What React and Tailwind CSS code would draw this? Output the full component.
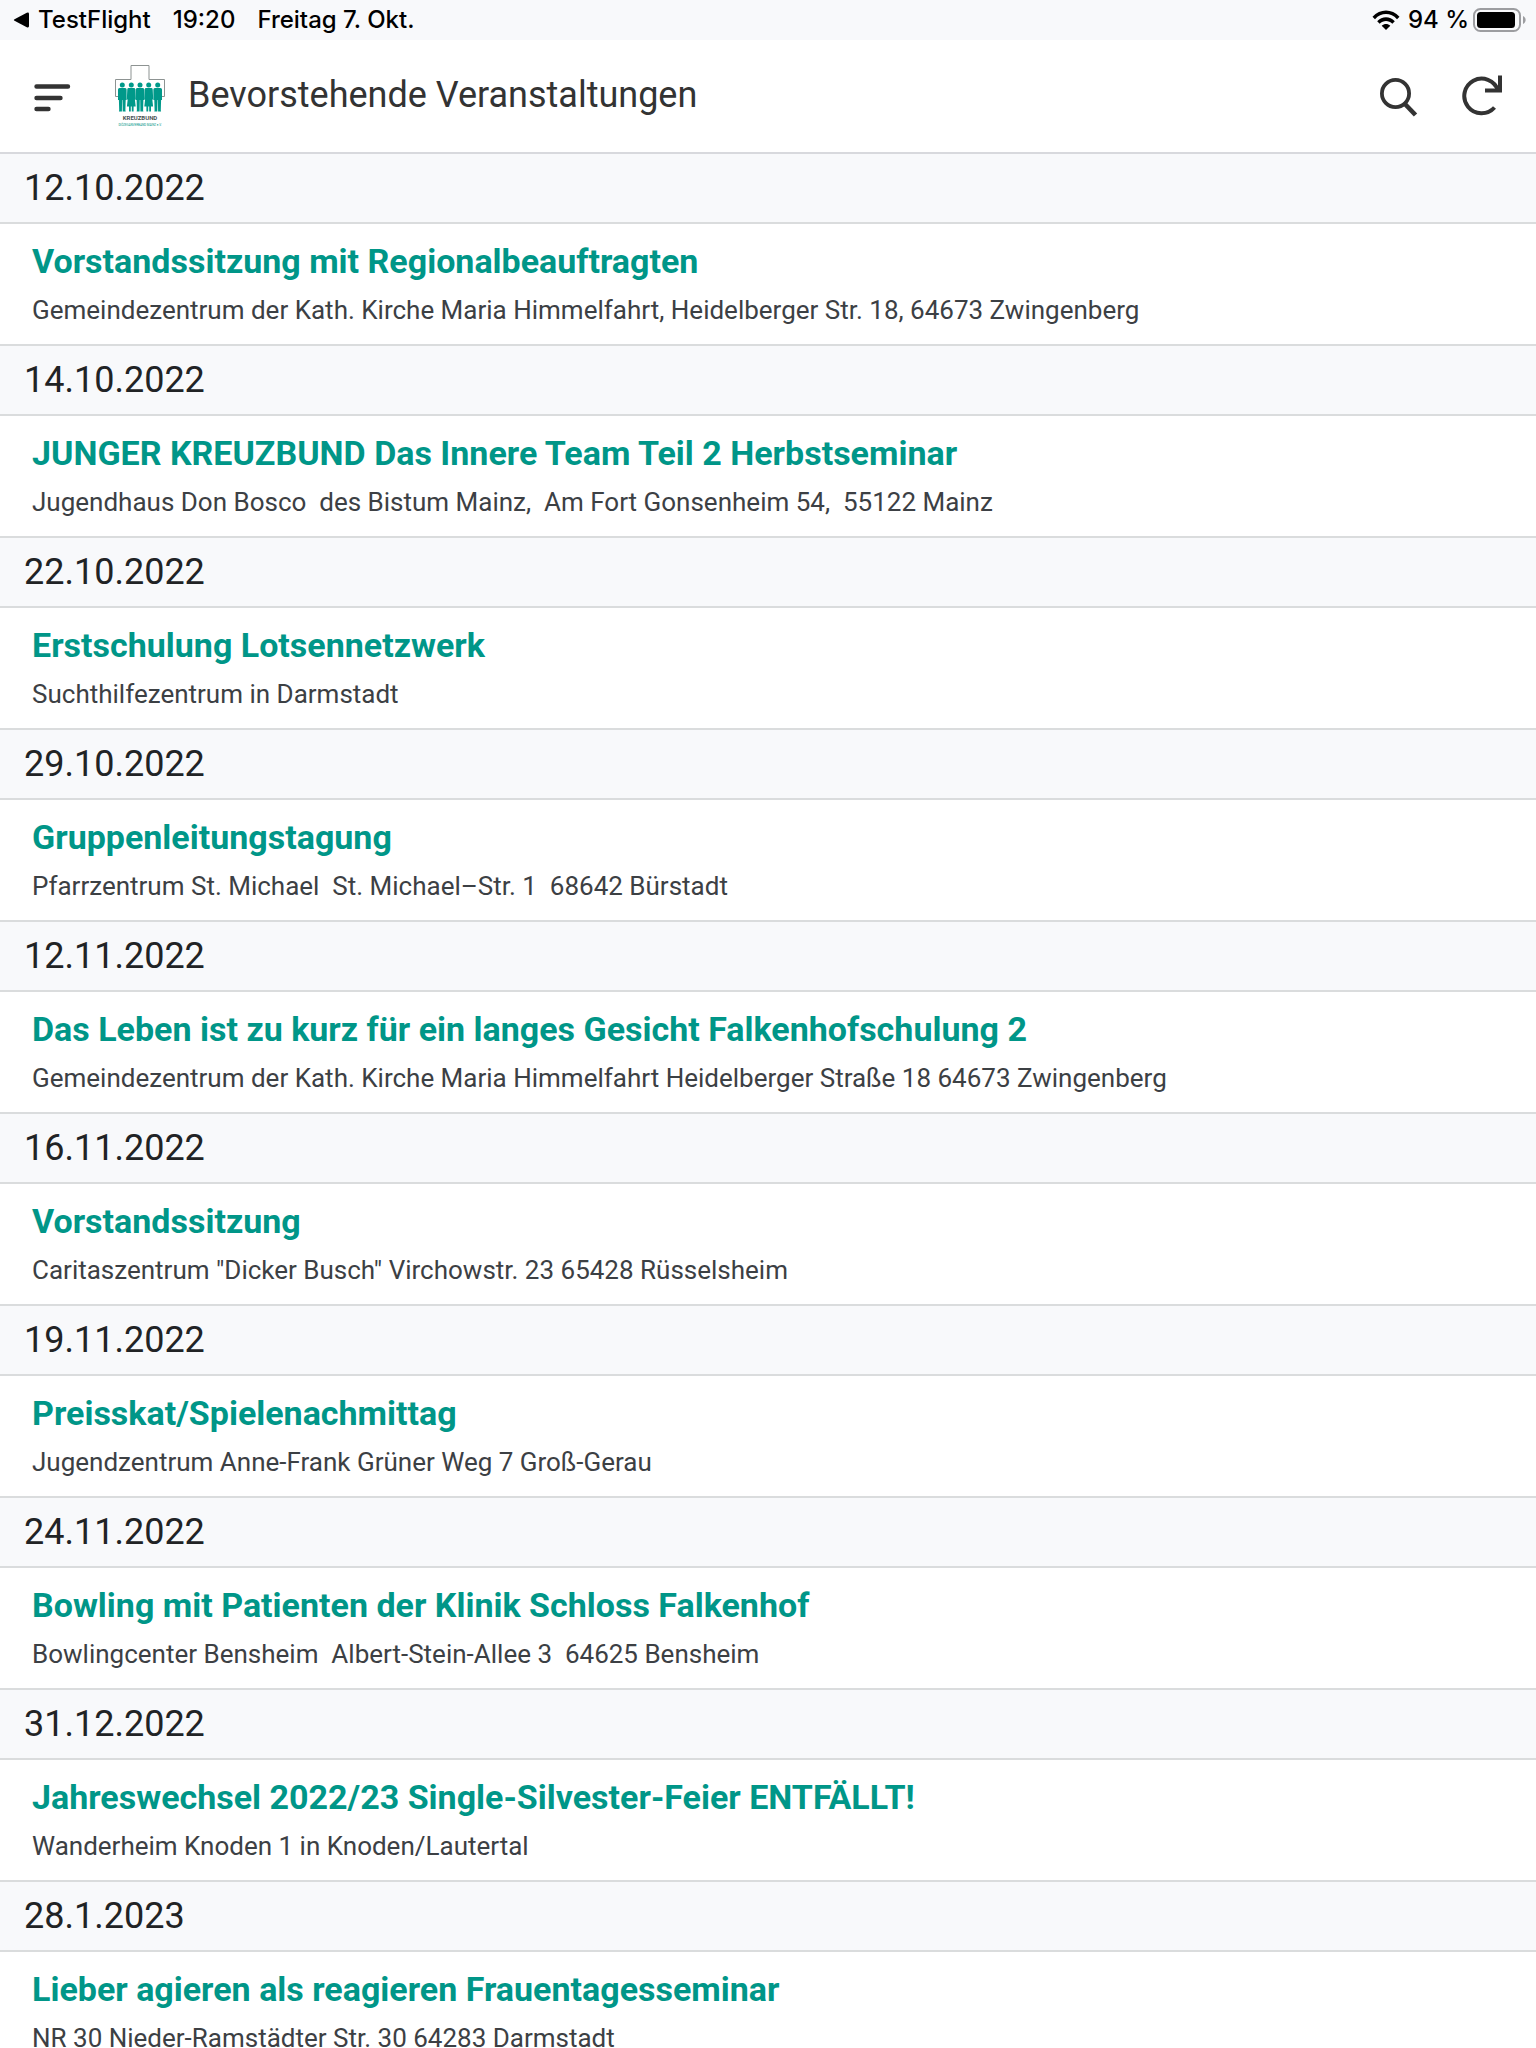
import React from 'react';

const events = [
  { date: '12.10.2022', title: 'Vorstandssitzung mit Regionalbeauftragten', place: 'Gemeindezentrum der Kath. Kirche Maria Himmelfahrt, Heidelberger Str. 18, 64673 Zwingenberg' },
  { date: '14.10.2022', title: 'JUNGER KREUZBUND Das Innere Team Teil 2 Herbstseminar', place: 'Jugendhaus Don Bosco  des Bistum Mainz,  Am Fort Gonsenheim 54,  55122 Mainz' },
  { date: '22.10.2022', title: 'Erstschulung Lotsennetzwerk', place: 'Suchthilfezentrum in Darmstadt' },
  { date: '29.10.2022', title: 'Gruppenleitungstagung', place: 'Pfarrzentrum St. Michael  St. Michael–Str. 1  68642 Bürstadt' },
  { date: '12.11.2022', title: 'Das Leben ist zu kurz für ein langes Gesicht Falkenhofschulung 2', place: 'Gemeindezentrum der Kath. Kirche Maria Himmelfahrt Heidelberger Straße 18 64673 Zwingenberg' },
  { date: '16.11.2022', title: 'Vorstandssitzung', place: 'Caritaszentrum "Dicker Busch" Virchowstr. 23 65428 Rüsselsheim' },
  { date: '19.11.2022', title: 'Preisskat/Spielenachmittag', place: 'Jugendzentrum Anne-Frank Grüner Weg 7 Groß-Gerau' },
  { date: '24.11.2022', title: 'Bowling mit Patienten der Klinik Schloss Falkenhof', place: 'Bowlingcenter Bensheim  Albert-Stein-Allee 3  64625 Bensheim' },
  { date: '31.12.2022', title: 'Jahreswechsel 2022/23 Single-Silvester-Feier ENTFÄLLT!', place: 'Wanderheim Knoden 1 in Knoden/Lautertal' },
  { date: '28.1.2023', title: 'Lieber agieren als reagieren Frauentagesseminar', place: 'NR 30 Nieder-Ramstädter Str. 30 64283 Darmstadt' },
];

const StatusBar = () => (
  <div className="flex h-10 shrink-0 items-center justify-between bg-[#f8f9fb] pl-3 pr-2 font-['Inter',sans-serif] text-2xl font-medium leading-10 text-black">
    <div className="flex items-center gap-[22px]">
      <button type="button" className="flex items-center gap-2">
        <svg width="18" height="16" viewBox="0 0 18 16">
          <path d="M2.5 7.2 14.8.8Q17 0 17 2V14Q17 16 14.8 15.2L2.5 8.8Q1 8 2.5 7.2Z" />
        </svg>
        TestFlight
      </button>
      <span>19:20</span>
      <span>Freitag 7. Okt.</span>
    </div>
    <div className="flex items-center gap-2">
      <svg width="28" height="20" viewBox="0 0 28 20">
        <path d="M.5 6.7C8-1.6 20-1.6 27.500 6.700L25 9.200C18.800 2.400 9.200 2.400 3 9.200Z" />
        <path d="M5.200 11.300C10 6 18 6 22.800 11.300L20.300 13.800C16.800 10.100 11.200 10.100 7.700 13.800Z" />
        <path d="M9.700 15.800C12.200 13.300 15.800 13.300 18.300 15.800L14 20Z" />
      </svg>
      <div className="flex items-center gap-1">
        <span>94 %</span>
        <svg width="55" height="24" viewBox="0 0 55 24">
          <rect x="1" y="1" width="46" height="22" rx="6.500" fill="none" stroke="#9c9da0" strokeWidth="2" />
          <rect x="4" y="4" width="38" height="16" rx="3.500" />
          <path d="M50 8C53.500 9.500 53.500 14.500 50 16Z" fill="#9c9da0" />
        </svg>
      </div>
    </div>
  </div>
);

const Man = ({ x }) => (
  <g transform={`translate(${x} 0)`}>
    <circle cx="0" cy="21" r="2.500" />
    <path d="M-2.800 24H2.800Q4.300 24 4.300 25.600V36H3.400L3.100 46.200L3.400 47.500H.4L.2 36H-.2L-.4 47.500H-3.400L-3.100 46.200L-3.400 36H-4.300V25.600Q-4.300 24-2.800 24Z" />
  </g>
);

const Woman = ({ x }) => (
  <g transform={`translate(${x} 0)`}>
    <circle cx="0" cy="21" r="2.500" />
    <path d="M-2.600 24H2.600Q3.900 24 4 25.400L4.500 35.500H3.600L4.400 42.500H2.300V47.500H.5V42.500H-.5V47.500H-2.300V42.500H-4.400L-3.600 35.500H-4.500L-4 25.400Q-3.900 24-2.600 24Z" />
  </g>
);

const Logo = () => (
  <svg className="h-16 w-[52px]" viewBox="0 0 52 64">
    <path d="M4 32.500H1.500V15.500H17V1.500H35V15.500H50.500V32.500H48" fill="none" stroke="#8d9392" strokeWidth="1" />
    <g fill="#00998a">
      <Man x={8.3} />
      <Woman x={17.3} />
      <Man x={26} />
      <Woman x={34.7} />
      <Man x={43.7} />
    </g>
    <text x="26" y="56" textAnchor="middle" className="fill-[#4b5253] font-['Roboto',sans-serif] text-[6px] font-bold">KREUZBUND</text>
    <text x="26" y="62" textAnchor="middle" className="fill-[#009688] font-['Roboto',sans-serif] text-[3px]">DIÖZESANVERBAND MAINZ e.V.</text>
  </svg>
);

const Header = () => (
  <header className="flex h-[114px] shrink-0 items-center border-b-2 border-[#d8d9dd] bg-white px-8 text-[#333333]">
    <button type="button" aria-label="Menü">
      <svg width="40" height="32" viewBox="0 0 40 32" fill="none" stroke="currentColor" strokeWidth="4.400" strokeLinecap="round">
        <path d="M4.500 6.500H36M4.500 18H28.500M4.500 29H16.500" />
      </svg>
    </button>
    <div className="ml-[42px] flex flex-1 items-center gap-[22px]">
      <Logo />
      <h1 className="pb-0.5 text-4xl leading-[44px]">Bevorstehende Veranstaltungen</h1>
    </div>
    <div className="flex items-center gap-10">
      <button type="button" aria-label="Suchen">
        <svg width="44" height="42" viewBox="0 0 44 42" fill="none" stroke="currentColor" strokeWidth="3.800">
          <circle cx="17.500" cy="18.500" r="13.600" />
          <path d="M26.500 28.500 37.500 40" strokeWidth="4.600" />
        </svg>
      </button>
      <button type="button" aria-label="Aktualisieren">
        <svg width="42" height="42" viewBox="0 0 42 42" fill="none" stroke="currentColor" strokeWidth="4">
          <path d="M32.500 32.500A17.300 17.300 0 1 1 36 15.500" />
          <path d="M23 15.500H38V.5" />
        </svg>
      </button>
    </div>
  </header>
);

const EventSection = ({ event }) => (
  <section>
    <h2 className="border-b-2 border-[#dadcdd] bg-[#f8f9fb] px-6 py-3 text-4xl leading-[44px] text-[#212325]">{event.date}</h2>
    <a href="#" className="block border-b-2 border-[#dadcdd] bg-white px-8 pb-3.5 pt-4">
      <h3 className="text-[34px] font-bold leading-[42px] text-[#009688]">{event.title}</h3>
      <p className="whitespace-pre-wrap pt-2 text-[26px] leading-10 text-[#3c4044]">{event.place}</p>
    </a>
  </section>
);

const App = () => {
  return (
    <div className="flex h-screen flex-col bg-white font-['Roboto',sans-serif]">
      <StatusBar />
      <Header />
      <main className="min-h-0 flex-1 overflow-y-auto [scrollbar-width:none]">
        {events.map((event) => (
          <EventSection key={event.date} event={event} />
        ))}
      </main>
    </div>
  );
};

export default App;
